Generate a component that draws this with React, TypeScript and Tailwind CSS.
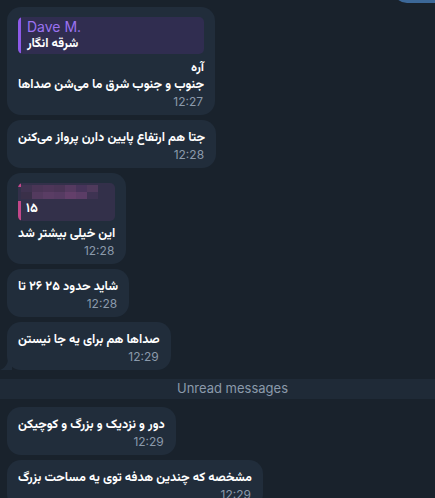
import React from 'react'

type Msg = {
  lines: string[]
  time: string
  reply?: 'dave' | 'hidden'
  tail?: boolean
}

const before: Msg[] = [
  { reply: 'dave', lines: ['آره', 'جنوب و جنوب شرق ما می‌شن صداها'], time: '12:27' },
  { lines: ['جتا هم ارتفاع پایین دارن پرواز می‌کنن'], time: '12:28' },
  { reply: 'hidden', lines: ['این خیلی بیشتر شد'], time: '12:28' },
  { lines: ['شاید حدود ۲۵ ۲۶ تا'], time: '12:28' },
  { lines: ['صداها هم برای یه جا نیستن'], time: '12:29', tail: true },
]

const after: Msg[] = [
  { lines: ['دور و نزدیک و بزرگ و کوچیکن'], time: '12:29' },
  { lines: ['مشخصه که چندین هدفه توی یه مساحت بزرگ'], time: '12:29' },
]

const fa = { fontFamily: 'Vazirmatn, "Noto Sans Arabic", sans-serif' }
const lat = { fontFamily: 'Inter, "Liberation Sans", sans-serif' }

function Pixels() {
  // blurred sender name
  const cells = [
    ['#3f3350', '#4a3556', '#4e3659', '#4a3556', '#553a60', '#47345a', '#4f3a5c', '#33304a'],
    ['#3a3049', '#533a5e', '#5a3d64', '#563b62', '#633f6a', '#5b3d66', '#3e3352', '#33304a'],
  ]
  return (
    <div className="flex flex-col">
      {cells.map((row, i) => (
        <div key={i} className="flex">
          {row.map((c, j) => (
            <div key={j} className="h-[7px] w-[11px]" style={{ background: c }} />
          ))}
        </div>
      ))}
    </div>
  )
}

function Bubble({ m }: { m: Msg }) {
  return (
    <div className="relative flex w-fit flex-col rounded-[14px] bg-[#212d3b] pb-[6px] pl-[11px] pr-[11px] pt-[10px]">
      {m.reply === 'dave' && (
        <div className="mb-[6px] flex h-[37px] overflow-hidden rounded-[5px] bg-[#302d50]">
          <div className="w-[3px] bg-[#8d5ae8]" />
          <div className="flex flex-1 flex-col pl-[6px] pt-[1px]">
            <span style={lat} className="text-[14px] leading-[18px] text-[#9b72f0]">
              Dave M.
            </span>
            <span dir="rtl" style={fa} className="self-start text-[12.6px] font-bold leading-[17px] text-white">
              شرقه انگار
            </span>
          </div>
        </div>
      )}
      {m.reply === 'hidden' && (
        <div className="mb-[5px] flex h-[38px] w-[97px] overflow-hidden rounded-[5px] bg-[#33304a]">
          <div className="flex w-[3px] flex-col">
            <div className="h-[4px] bg-[#c2478a]" />
            <div className="h-[14px]" />
            <div className="flex-1 bg-[#c2478a]" />
          </div>
          <div className="flex flex-1 flex-col pt-[2px]">
            <Pixels />
            <span style={fa} className="pl-[5px] text-[13px] font-bold leading-[20px] text-white">
              ۱۵
            </span>
          </div>
        </div>
      )}
      <div dir="rtl" style={fa} className="flex flex-col text-[12.6px] font-bold leading-[17px] text-white">
        {m.lines.map((l) => (
          <span key={l}>{l}</span>
        ))}
      </div>
      <span style={lat} className="self-end pr-[1px] text-[12px] leading-[15px] text-[#8b9aab]">
        {m.time}
      </span>
      {m.tail && (
        <svg className="absolute bottom-0 left-[-7px]" width="12" height="12" viewBox="0 0 12 12">
          <path d="M12 0 L12 12 L0 12 C5 10 8 6 8 0 Z" fill="#212d3b" />
        </svg>
      )}
    </div>
  )
}

export default function App() {
  return (
    <div className="relative h-[498px] w-[435px] overflow-hidden bg-[#19222c]">
      <div className="absolute right-0 top-[-20px] h-[23px] w-[42px] rounded-bl-[14px] bg-[#3c6898]" />
      <div className="flex flex-col gap-[5px] pl-[7px] pt-[7px]">
        {before.map((m, i) => (
          <Bubble key={i} m={m} />
        ))}
      </div>
      <div className="mt-[9px] flex h-[20px] items-center justify-center bg-[#1f2a37]">
        <span style={lat} className="pl-[30px] text-[13px] text-[#8b9aab]">
          Unread messages
        </span>
      </div>
      <div className="mt-[8px] flex flex-col gap-[5px] pl-[7px]">
        {after.map((m, i) => (
          <Bubble key={i} m={m} />
        ))}
      </div>
    </div>
  )
}
